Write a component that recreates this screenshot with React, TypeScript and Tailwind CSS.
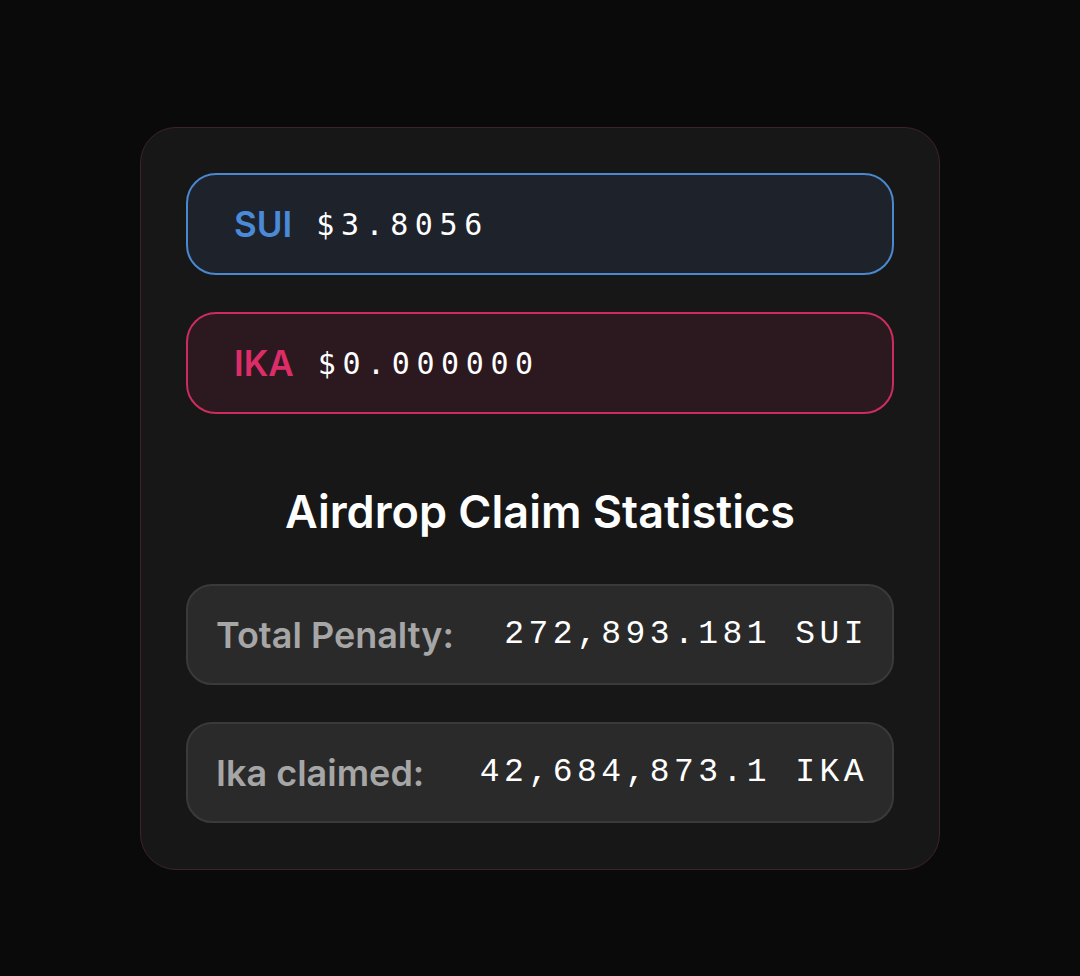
export default function App() {
  return (
    <div className="min-h-[976px] w-full bg-[#0a0a0a] flex justify-center pt-[127px]">
      <div
        className="w-[800px] h-[743px] rounded-[36px] border-[1.5px] border-[#40222b] bg-[#171717] p-[45px] flex flex-col"
        style={{ fontFamily: 'Inter, "Noto Sans", sans-serif' }}
      >
        {/* Prices */}
        <div className="flex flex-col gap-[37px]">
          <div className="h-[102px] rounded-[30px] border-2 border-[#4a88d0] bg-[#1e232b] flex items-center pl-[46px]">
            <span className="text-[35px] font-semibold text-[#4a8ad8]">SUI</span>
            <span className="ml-[24px] text-[30px] tracking-[0.22em] text-white" style={{ fontFamily: '"DejaVu Sans Mono", monospace' }}>
              $3.8056
            </span>
          </div>
          <div className="h-[102px] rounded-[30px] border-2 border-[#cc2d5e] bg-[#2c1920] flex items-center pl-[46px]">
            <span className="text-[35px] font-semibold text-[#dd2d68]">IKA</span>
            <span className="ml-[24px] text-[30px] tracking-[0.22em] text-white" style={{ fontFamily: '"DejaVu Sans Mono", monospace' }}>
              $0.000000
            </span>
          </div>
        </div>

        {/* Stats */}
        <h2 className="mt-[75px] text-center text-[45px] font-semibold leading-none text-white">
          Airdrop Claim Statistics
        </h2>
        <div className="mt-[50px] flex flex-col gap-[37px]">
          <StatRow label="Total Penalty:" value="272,893.181 SUI" />
          <StatRow label="Ika claimed:" value="42,684,873.1 IKA" />
        </div>
      </div>
    </div>
  )
}

function StatRow({ label, value }: { label: string; value: string }) {
  return (
    <div className="h-[101px] rounded-[26px] border-2 border-[#3a3a3a] bg-[#2a2a2a] flex items-center justify-between pl-[28px] pr-[24px]">
      <span className="text-[36px] font-semibold text-[#a6a6a6]">{label}</span>
      <span className="text-[33px] tracking-[0.135em] text-white" style={{ fontFamily: '"Courier New", "Liberation Mono", monospace' }}>
        {value}
      </span>
    </div>
  )
}
